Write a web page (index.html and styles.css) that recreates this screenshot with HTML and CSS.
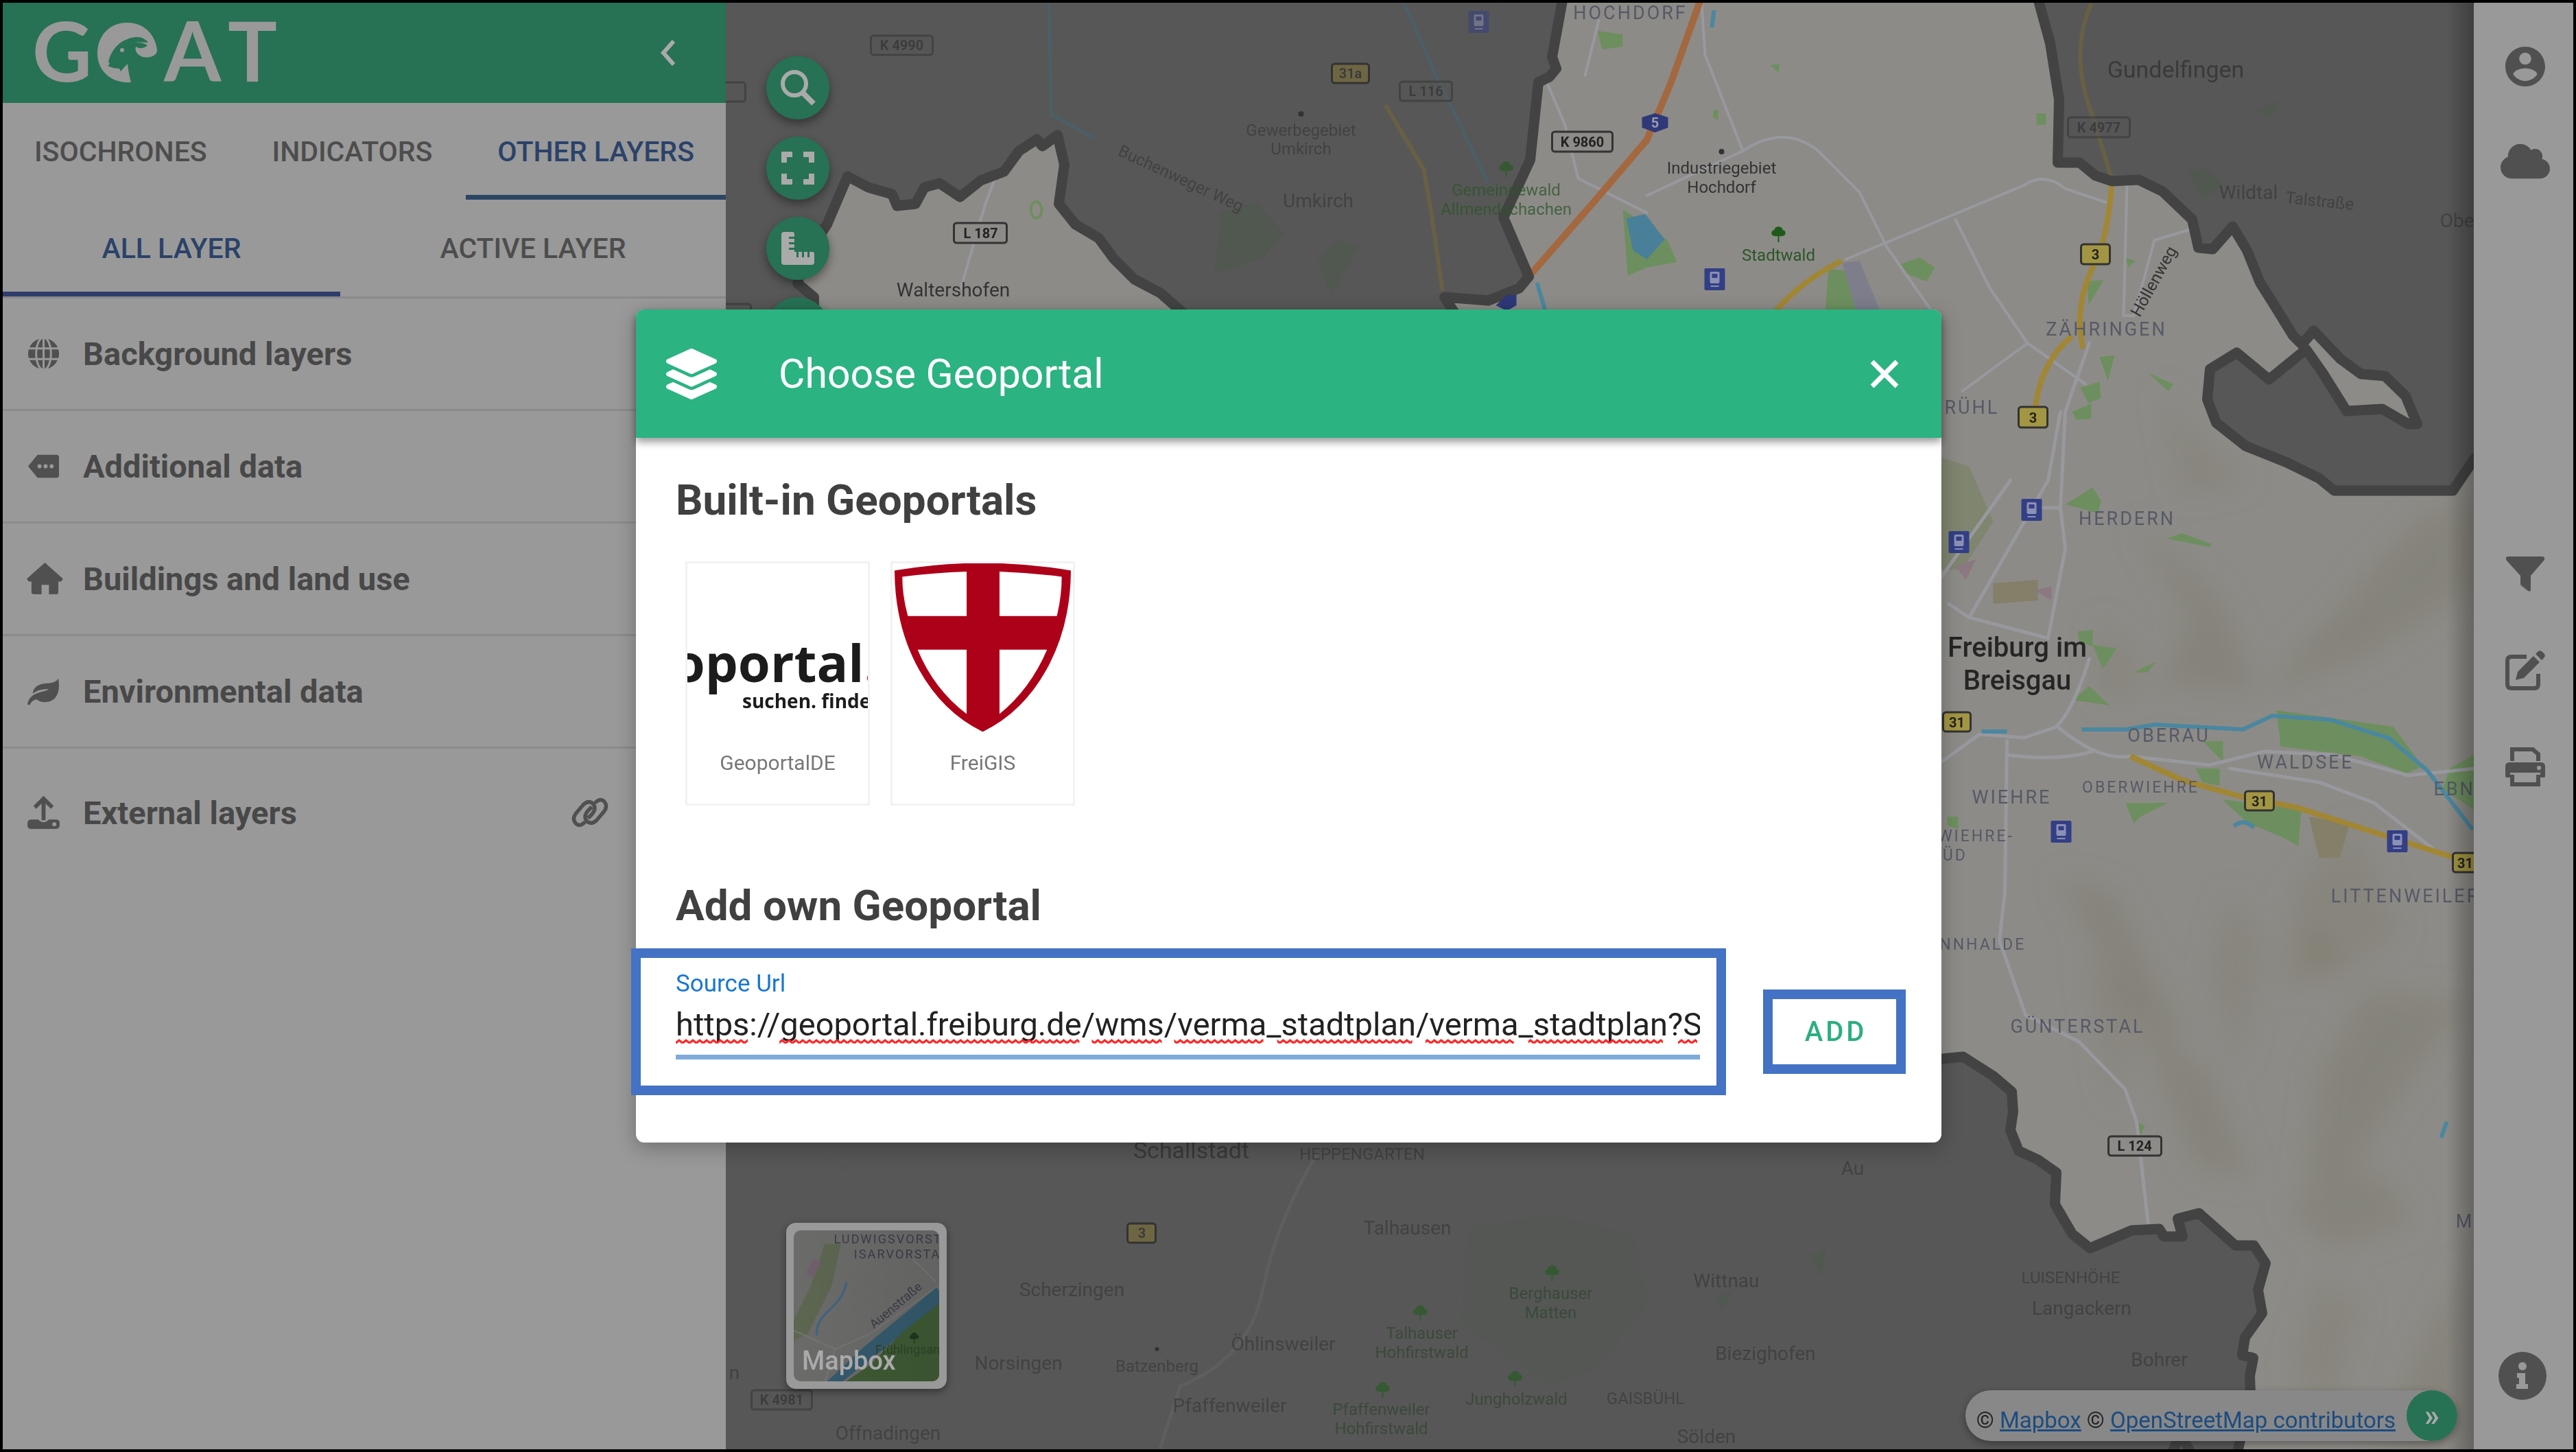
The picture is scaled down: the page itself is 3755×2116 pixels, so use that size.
FILE: index.html
```html
<!DOCTYPE html>
<html lang="en">
<head>
<meta charset="utf-8">
<title>GOAT – Choose Geoportal</title>
<link rel="stylesheet" href="styles.css">
</head>
<body>
<div class="app">
  <aside class="sidebar">
    <header class="brand">
      <svg class="logo" viewBox="44 4 366 146" role="img" aria-label="GOAT">
        <g class="logo-text"><text x="45" y="119">G</text><text x="237" y="119">A</text><text x="330" y="119">T</text></g>
        <path d="M189 120C160 122 140 103 140 78C140 50 160 33 183 33C208 33 224 50 227 72C228 82 215 85 206 83C198 80 194 74 196 68C202 72 209 70 213 66C207 62 200 62 193 61L214 62C209 55 198 51 184 57C172 61 160 72 156 90L158 93L155 96L163 99L172 100L174 104L179 98L184 93C185 104 187 113 189 120Z"/>
        <circle cx="176" cy="73" r="3"/>
      </svg>
      <button class="plain" aria-label="Collapse panel"><svg class="chevron" viewBox="0 0 24 40"><path d="M20 3L5 20L20 37"/></svg></button>
    </header>
    <nav class="tabs main-tabs">
      <button class="tab">ISOCHRONES</button>
      <button class="tab">INDICATORS</button>
      <button class="tab active">OTHER LAYERS</button>
    </nav>
    <nav class="tabs sub-tabs">
      <button class="tab active">ALL LAYER</button>
      <button class="tab">ACTIVE LAYER</button>
    </nav>
    <ul class="layers">
      <li><svg class="ico" viewBox="0 0 48 48"><circle cx="24" cy="24" r="23"/><g class="cut"><ellipse cx="24" cy="24" rx="11" ry="24"/><path d="M24 0V48M2 16H46M2 32H46"/></g></svg><span>Background layers</span></li>
      <li><svg class="ico" viewBox="0 0 48 48"><path d="M15 7H43Q47 7 47 11V37Q47 41 43 41H15L1 24Z"/><g class="dots"><circle cx="18" cy="24" r="3"/><circle cx="27" cy="24" r="3"/><circle cx="36" cy="24" r="3"/></g></svg><span>Additional data</span></li>
      <li><svg class="ico" viewBox="0 0 48 48"><path d="M26 0L53 24L50 28H46V44Q46 47 43 47H32V33H21V47H10Q6 47 6 44V28H2L-1 24Z"/></svg><span>Buildings and land use</span></li>
      <li><svg class="ico" viewBox="0 0 48 48"><path d="M46 5C50 28 41 41 24 40C20 40 16 38 14 36C8 37 5 40 4 44H0C1 34 8 28 20 25Q29 23 32 21Q20 19 8 27C9 16 20 12 31 12Q42 11 46 5Z"/></svg><span>Environmental data</span></li>
      <li class="external"><svg class="ico" viewBox="0 0 48 48"><path d="M6 34H16Q24 42 32 34H42Q48 34 48 39V43Q48 48 42 48H6Q0 48 0 42V40Q0 34 6 34Z"/><path class="line" d="M24 35V5M11 16L24 3L37 16"/><circle class="hole" cx="40" cy="41" r="3"/></svg><span>External layers</span>
        <button class="plain link" aria-label="Add external layer"><svg viewBox="0 0 56 48"><path class="line" d="M20 39Q12 48 5 41Q-1 34 6 25L18 11Q26 4 33 10Q39 18 31 27L25 33M36 9Q44 0 51 7Q57 14 50 23L38 37Q30 44 23 38Q17 30 25 21L31 15"/></svg></button></li>
    </ul>
  </aside>

  <main class="map">
    <svg class="canvas" viewBox="1057 4 2549 2108" preserveAspectRatio="xMidYMid slice">
      <defs>
        <filter id="soft"><feGaussianBlur stdDeviation="20"/></filter>
        <linearGradient id="edge"><stop offset="0" stop-color="#000" stop-opacity="0"/><stop offset="1" stop-color="#000" stop-opacity=".28"/></linearGradient>
        <symbol id="tree" viewBox="0 0 24 24" overflow="visible"><path d="M12 0Q18 1 18 5Q23 6 22 11Q20 15 13 14V23H11V14Q3 15 2 11Q1 6 6 5Q6 1 12 0Z"/></symbol>
        <symbol id="train" viewBox="0 0 30 32" overflow="visible"><rect width="30" height="32" rx="2" fill="#333f85"/><rect x="8" y="5" width="14" height="17" rx="2" fill="#8b90b5"/><rect x="11" y="8" width="8" height="6" fill="#333f85"/><path d="M9 26H21" stroke="#8b90b5" stroke-width="2"/></symbol>
        <clipPath id="city"><path id="east" d="M2279 -10L2262 83L2268 100L2258 112L2242 120L2230 233L2191 317L2228 403L2214 420L2169 438L2105 433L2118 453L2400 1000L2780 1545L2831 1543L2861 1540L2905 1568L2932 1591L2934 1620L2930 1647L2942 1677L2970 1690L2997 1709L2995 1755L3020 1798L3046 1819L3107 1793L3147 1791L3154 1802L3181 1802L3174 1776L3205 1768L3258 1815L3285 1815L3302 1841L3291 1880L3297 1914L3272 1949L3268 1975L3284 1979L3279 2005L3280 2031L3258 2130H3640V640L3606 669L3575 715H3402L3380 697L3333 674L3273 650L3230 616L3217 582L3221 538L3260 514L3307 553L3361 509L3385 543L3420 599L3472 596L3510 618L3523 618L3506 577L3476 548L3441 545L3411 523L3372 482L3355 502L3342 489L3318 450L3294 412L3275 365L3254 330L3225 363L3204 361L3195 320L3152 279L3117 262L3078 264L3054 256L3031 237L2999 237L3001 145L2988 63L2968 -10Z"/><path id="west" d="M1186 460V433L1162 413L1170 380L1205 327L1222 287L1235 257L1265 273L1300 283L1307 300L1334 297L1347 273L1369 267L1399 287L1429 263L1463 250L1485 220L1511 203L1519 213L1541 197L1551 240L1543 297L1567 327L1601 347L1623 377L1653 407L1691 427L1740 470Z"/></clipPath>
      </defs>
      <rect x="1057" y="0" width="2560" height="2120" fill="#575757"/>

      <g fill="#4b594a" opacity=".6">
        <path d="M1780 310L1830 295L1870 340L1840 375L1770 400ZM1920 380L1950 350L1980 360L1940 430ZM1190 1680L1230 1700L1245 1710Z"/>
        <path d="M2140 1790L2260 1770L2380 1800L2400 1900L2330 1990L2260 2020L2130 1930Z" opacity=".4"/>
        <path d="M3190 250L3215 245L3240 270L3210 290ZM3290 160L3320 148L3310 172ZM2640 1830L2660 1820L2655 1860ZM2500 1890L2525 1880L2510 1910Z"/>
      </g>
      <g fill="none" stroke-width="5">
        <path d="M1528 0L1532 167L1592 200M2044 0L2096 117L2169 267" stroke="#4b5f66"/>
        <path d="M2019 153L2075 247L2087 317L2102 423M3048 5Q3015 80 3050 170L3078 262" stroke="#686044" stroke-width="6"/>
        <path d="M1920 1680Q1860 1780 1840 1880T1720 2020L1690 2112" stroke="#5e5e5e"/>
      </g>

      <g clip-path="url(#city)">
        <rect x="1057" y="0" width="2560" height="2120" fill="#8d8b87"/>
        <g filter="url(#soft)" fill="#807e70">
          <path d="M3110 760L3190 900L3150 1000L3290 1010L3240 880ZM3520 760L3600 720V860L3440 960L3300 1010L3360 940ZM3000 1280L3080 1300L3180 1500L3140 1540ZM3350 1330L3420 1400L3330 1440ZM3450 1440L3600 1460L3520 1560L3420 1720L3360 1740L3380 1560ZM3590 1840V2112H3470L3530 1960ZM3330 1760L3460 1700L3520 1780L3400 1820ZM3120 1500L3220 1560L3280 1720L3200 1700Z" opacity=".6"/>
          <path d="M3430 1200L3500 1360L3380 1440L3340 1300ZM3060 900L3110 960L3120 1010L3060 1020ZM3040 1400L3120 1440L3080 1620ZM3150 560L3200 640L3280 700L3180 720ZM3380 1860L3440 1900L3400 2060L3340 2000ZM3250 1300L3300 1380L3260 1560L3220 1420Z" opacity=".45"/>
        </g>
        <path d="M2750 640L2870 680L2905 760L2860 830L2780 830Z" fill="#7f856f"/>
        <g fill="#6d8f5f">
          <path d="M3318 1035L3488 1059L3531 1117L3507 1127L3440 1102L3324 1088ZM3239 1165L3354 1180L3350 1233L3324 1219L3275 1199ZM3200 1120H3235V1145L3210 1140ZM3210 1080H3240V1110ZM3098 1170H3160L3120 1190L3110 1200ZM3020 1020L3045 1000L3075 1028ZM3050 940L3085 945L3065 975ZM3028 920L3050 918V942L3030 935ZM3110 980L3142 964L3130 980ZM3157 785L3180 777L3224 793L3220 797ZM3010 735L3050 710L3062 730L3058 748ZM3570 1120L3606 1100V1180L3560 1150Z"/>
          <path d="M3020 600L3048 588V610L3026 612ZM3032 565L3060 556L3062 580L3044 588ZM3060 520L3082 518L3072 555ZM3130 543L3168 560L3160 570ZM2770 385L2798 375L2820 390L2808 410L2780 400ZM2665 392L2695 395L2705 453H2660ZM2365 305L2430 350L2444 382L2400 390L2372 402ZM2328 45L2365 50V68L2335 72ZM3042 410L3066 408L3044 445ZM3096 375L3112 380L3102 390ZM2838 1190H2854V1208L2838 1203ZM3112 1634L3126 1640L3120 1655ZM2580 95L2594 93L2592 106ZM2498 160H2504V176L2496 170ZM2968 165H2982V182H2968Z"/>
          <ellipse cx="1510" cy="306" rx="8" ry="12" fill="none" stroke="#6d8f5f" stroke-width="4"/>
        </g>
        <path d="M2905 850L2970 845V875L2905 880ZM3365 1190L3425 1200L3410 1250L3380 1250Z" fill="#847f69"/>
        <path d="M2850 825L2880 815L2865 845ZM2965 860L2990 855V875Z" fill="#8c7880"/>
        <path d="M2685 383L2710 380L2740 453H2705Z" fill="#7e7d8c"/>
        <path d="M2370 318L2398 312L2426 349L2400 378L2380 365Z" fill="#4a7f99"/>
        <g fill="none" stroke="#98999e" stroke-linecap="round" stroke-width="6">
          <path d="M2400 285L2540 220Q2600 180 2650 220L2710 280L2750 360L2815 453M2690 378L2950 270Q2980 250 3010 275L3070 295M2850 320L2900 420L2955 500L2860 570M3100 270L3095 460H3110L3140 350L3190 335M2955 500L3040 560" stroke-width="4"/>
          <path d="M3045 500L3010 600L3003 740L3010 800L2985 930L2870 900L2840 880M3003 600L2985 700L2870 900M3000 740H2960M2930 700L2830 840M3045 960Q3020 1040 2995 1060L2950 1075L2885 1070L2830 1110M2925 1080L2922 1300L2914 1370L2952 1479L3030 1518L3097 1587L3114 1634L3131 1785M3000 1060Q3060 1110 3105 1102M2925 1100Q3000 1110 3050 1095M3105 1102L3220 1115L3300 1095L3400 1100L3510 1130L3606 1120M3250 1120L3380 1140L3460 1170L3550 1240" stroke-width="5"/>
          <path d="M1450 260L1435 300L1400 420M2250 110L2280 180L2300 260L2400 310M2480 5L2485 80L2540 220M2330 30L2310 110" stroke-width="4"/>
        </g>
        <path d="M3034 1063H3098L3141 1056L3269 1063L3312 1043L3397 1049L3482 1076L3537 1122L3604 1209M2888 1066H2925M3256 1204Q3270 1192 3285 1206M3566 1635L3558 1658M2498 15L2495 40M2240 412L2252 453" fill="none" stroke="#4a87a0" stroke-width="6"/>
        <path d="M3105 1102L3178 1136L3263 1160L3348 1177L3470 1216L3600 1257M3078 262Q3075 320 3060 370Q3020 440 3036 508M3020 490Q2970 530 2965 608M2684 380Q2625 410 2588 453" fill="none" stroke="#a18634" stroke-width="8"/>
        <path d="M2480 -5L2435 121L2400 204L2324 293L2228 403" fill="none" stroke="#a3683f" stroke-width="10"/>
      </g>
      <g class="border"><use href="#east"/><use href="#west"/><path d="M3160 2130L3178 2090L3200 2130"/></g>

      <g class="shield">
        <g opacity=".55"><rect x="1269" y="52" width="90" height="28"/><rect x="2040" y="119" width="76" height="28"/><rect x="3014" y="171" width="90" height="29"/><rect x="1095" y="2026" width="88" height="28"/><rect x="1020" y="120" width="66" height="28"/><rect x="1020" y="443" width="74" height="28"/></g>
        <g fill="#8d8b87"><rect x="2262" y="192" width="88" height="29"/><rect x="1390" y="325" width="77" height="29"/><rect x="3073" y="1656" width="77" height="28"/></g>
        <g fill="#a39642"><rect x="3033" y="356" width="42" height="29"/><rect x="2942" y="593" width="42" height="30"/><rect x="2832" y="1038" width="40" height="28"/><rect x="3272" y="1153" width="42" height="28"/><rect x="3575" y="1243" width="42" height="28"/></g>
        <g fill="#6e6643"><rect x="1941" y="93" width="54" height="28"/><rect x="1643" y="1783" width="41" height="28"/></g>
      </g>
      <path d="M2412 165L2431 171V186L2412 193L2393 186V171ZM2196 430H2210V445L2196 453L2180 445Z" fill="#2f3878"/>
      <g class="shield-text">
        <g fill="#3d3d3d"><text x="1314" y="73">K 4990</text><text x="2078" y="140">L 116</text><text x="3059" y="193">K 4977</text><text x="1139" y="2047">K 4981</text><text x="1968" y="114">31a</text><text x="1664" y="1804">3</text></g>
        <g fill="#222"><text x="2306" y="214">K 9860</text><text x="1429" y="347">L 187</text><text x="3111" y="1677">L 124</text><text x="3054" y="378">3</text><text x="2963" y="616">3</text><text x="2852" y="1060">31</text><text x="3293" y="1175">31</text><text x="3593" y="1265">31</text></g>
        <text x="2412" y="186" fill="#9a9cb0">5</text>
      </g>
      <g><use href="#train" x="2484" y="391" width="30" height="32"/><use href="#train" x="2946" y="727" width="30" height="32"/><use href="#train" x="2840" y="774" width="30" height="32"/><use href="#train" x="2989" y="1196" width="30" height="32"/><use href="#train" x="3479" y="1210" width="30" height="32"/><use href="#train" x="2140" y="16" width="30" height="32" opacity=".5"/></g>
      <g fill="#1f5a1c"><use href="#tree" x="2580" y="330" width="24" height="24"/><g opacity=".6"><use href="#tree" x="2183" y="235" width="24" height="24"/><use href="#tree" x="2250" y="1844" width="24" height="24"/><use href="#tree" x="2058" y="1902" width="24" height="24"/><use href="#tree" x="2196" y="1998" width="24" height="24"/><use href="#tree" x="2003" y="2014" width="24" height="24"/></g></g>
      <g fill="#333"><circle cx="2509" cy="221" r="4"/><circle cx="1896" cy="166" r="4"/><circle cx="1686" cy="1966" r="3"/></g>

      <g class="place on-light">
        <text x="1389" y="432">Waltershofen</text>
        <g class="small"><text x="2509" y="253">Industriegebiet</text><text x="2509" y="281">Hochdorf</text><text x="3139" y="418" transform="rotate(-61 3139 410)">Höllenweg</text></g>
        <g class="city"><text x="2940" y="957">Freiburg im</text><text x="2940" y="1005">Breisgau</text></g>
      </g>
      <g class="place wood"><text x="2592" y="380">Stadtwald</text><g opacity=".75"><text x="2195" y="285">Gemeindewald</text><text x="2195" y="313">Allmendschachen</text></g></g>
      <g class="district"><text x="2376" y="28">HOCHDORF</text><text x="3070" y="489">ZÄHRINGEN</text><text x="2864" y="603">BRÜHL</text><text x="3100" y="765">HERDERN</text><text x="3161" y="1081">OBERAU</text><text x="3360" y="1120">WALDSEE</text><text x="2932" y="1171">WIEHRE</text><text x="3028" y="1505">GÜNTERSTAL</text><text x="3506" y="1315">LITTENWEILER</text><text x="3596" y="1159">EBNET</text><text x="3603" y="1789">MA</text>
        <g class="minor"><text x="3120" y="1155">OBERWIEHRE</text><text x="2880" y="1226">WIEHRE-</text><text x="2841" y="1254">SÜD</text><text x="2872" y="1384">SONNHALDE</text></g></g>
      <g class="place on-dark">
        <text class="town" x="3171" y="113">Gundelfingen</text><text class="town" x="1736" y="1688">Schallstadt</text>
        <g><text x="1921" y="302">Umkirch</text><text x="3277" y="290">Wildtal</text><text x="3586" y="331">Ober</text><text x="2700" y="1712">Au</text><text x="2051" y="1799">Talhausen</text><text x="1562" y="1889">Scherzingen</text><text x="2516" y="1876">Wittnau</text><text x="1870" y="1968">Öhlinsweiler</text><text x="2573" y="1982">Biezighofen</text><text x="1484" y="1996">Norsingen</text><text x="1792" y="2058">Pfaffenweiler</text><text x="1294" y="2098">Offnadingen</text><text x="2487" y="2103">Sölden</text><text x="3034" y="1916">Langackern</text><text x="3147" y="1991">Bohrer</text><text x="1070" y="2010">n</text></g>
        <g class="small"><text x="1896" y="198">Gewerbegebiet</text><text x="1896" y="225">Umkirch</text><text x="1720" y="268" transform="rotate(25 1720 262)">Buchenweger Weg</text><text x="3381" y="301" transform="rotate(6 3381 294)">Talstraße</text><text x="1686" y="1999">Batzenberg</text><text x="1985" y="1690">HEPPENGARTEN</text><text x="2398" y="2046">GAISBÜHL</text><text x="3018" y="1870">LUISENHÖHE</text></g>
        <g class="small wood"><text x="2260" y="1893">Berghauser</text><text x="2260" y="1921">Matten</text><text x="2072" y="1951">Talhauser</text><text x="2072" y="1979">Hohfirstwald</text><text x="2210" y="2047">Jungholzwald</text><text x="2013" y="2062">Pfaffenweiler</text><text x="2013" y="2090">Hohfirstwald</text></g>
      </g>
      <rect x="3566" y="0" width="40" height="2120" fill="url(#edge)"/>
    </svg>

    <div class="tools">
      <button class="round" aria-label="Search"><svg viewBox="0 0 56 56"><circle cx="23" cy="22" r="17"/><path d="M35 35L51 51" stroke-width="8"/></svg></button>
      <button class="round" aria-label="Full screen"><svg viewBox="0 0 56 56"><path d="M8 20V8H20M36 8H48V20M48 36V48H36M20 48H8V36" stroke-width="8"/></svg></button>
      <button class="round" aria-label="Measure"><svg viewBox="0 0 56 56"><path class="solid" d="M8 4H20Q23 4 23 7V11H15V14H23V19H15V22H23V27H15V30H23V33H26V41H29V33H34V41H37V33H42V41H45V33H49Q52 33 52 36V48Q52 52 48 52H8Q4 52 4 48V8Q4 4 8 4Z"/></svg></button>
      <button class="round" aria-label="Draw"></button>
    </div>

    <div class="map-foot">
      <button class="basemap">
        <svg viewBox="0 0 210 219" preserveAspectRatio="xMidYMid slice">
          <rect width="210" height="219" fill="#6b6b6a"/>
          <path d="M45 20H68L55 80L20 150L0 160V130L25 80Z" fill="#5d6650"/><path d="M28 42L40 44L28 70L18 62Z" fill="#705f6c"/>
          <path d="M76 75Q74 95 52 115T34 152" fill="none" stroke="#3f6482" stroke-width="3"/>
          <path d="M0 145L60 172L110 150L210 80M170 40L205 75M60 172L45 219" fill="none" stroke="#757575" stroke-width="2"/>
          <path d="M206 83L210 88V112L170 140L70 219H48L100 170Z" fill="#355a6e"/><path d="M210 106L160 145L110 195L75 219H210Z" fill="#3f5a34"/>
          <g fill="#1d3a1c"><use href="#tree" x="166" y="148" width="16" height="16"/></g>
          <g class="thumb-text"><text x="58" y="19">LUDWIGSVORSTADT</text><text x="87" y="41">ISARVORSTADT</text><text x="116" y="143" transform="rotate(-40 116 143)" class="street">Auenstraße</text><text x="118" y="179" fill="#2c4428" class="street">Frühlingsanlagen</text></g>
          <rect width="210" height="219" fill="url(#edge)" opacity=".3"/>
        </svg>
        <span>Mapbox</span>
      </button>
      <div class="attribution"><p>© <a href="#mapbox">Mapbox</a> © <a href="#osm">OpenStreetMap contributors</a></p><button class="more" aria-label="Toggle attribution">»</button></div>
    </div>
  </main>

  <nav class="rail">
    <button class="plain" aria-label="Account"><svg viewBox="2 2 20 20"><path d="M12 2C6.48 2 2 6.48 2 12s4.48 10 10 10 10-4.48 10-10S17.52 2 12 2zm0 3c1.66 0 3 1.34 3 3s-1.34 3-3 3-3-1.34-3-3 1.34-3 3-3zm0 14.2c-2.500 0-4.710-1.280-6-3.220.03-1.990 4-3.080 6-3.080 1.990 0 5.970 1.090 6 3.080-1.290 1.940-3.500 3.220-6 3.220z"/></svg></button>
    <button class="plain cloud" aria-label="Cloud"><svg viewBox="0 32 640 448"><path d="M537.6 226.6c4.1-10.7 6.4-22.4 6.4-34.6 0-53-43-96-96-96-19.7 0-38.1 6-53.300 16.200C367 64.200 315.300 32 256 32c-88.400 0-160 71.600-160 160 0 2.700.1 5.400.2 8.100C40.200 219.800 0 273.200 0 336c0 79.500 64.500 144 144 144h368c70.700 0 128-57.300 128-128 0-61.900-44-113.600-102.400-125.400z"/></svg></button>
    <button class="plain first-tool" aria-label="Filter"><svg viewBox="0 0 58 58"><path d="M3 4H55Q59 6 56 10L37 32V53Q36 56 33 54L24 47Q22 46 22 43V32L2 10Q-1 6 3 4Z"/></svg></button>
    <button class="plain" aria-label="Edit"><svg viewBox="0 0 58 58"><path class="line" d="M31 9H9Q3 9 3 15V49Q3 55 9 55H42Q48 55 48 49V34"/><path d="M41 8L50 17L27 40L15 43L18 31ZM44 5L48 1Q51 -1 54 2L57 5Q59 8 56 11L53 14Z"/></svg></button>
    <button class="plain" aria-label="Print"><svg viewBox="0 0 58 58"><path class="line" d="M10 20V3H40L48 10V20M10 40V54H48V40"/><path d="M6 22H52Q58 22 58 28V42Q58 44 56 44H51V37H7V44H2Q0 44 0 42V28Q0 22 6 22Z"/><circle class="hole" cx="49" cy="30" r="3"/></svg></button>
    <button class="plain info" aria-label="Information"><svg viewBox="0 0 70 70"><circle cx="35" cy="35" r="35"/><path class="hole" d="M35 15A6 6 0 1 1 35 27A6 6 0 1 1 35 15ZM27 31H39V47H43V54H26V47H30V38H27Z"/></svg></button>
  </nav>
</div>

<div class="overlay">
  <section class="modal" role="dialog" aria-labelledby="modal-title">
    <header class="modal-head">
      <svg class="stack" viewBox="0 0 512 512"><path d="M12.410 148.020l232.940 105.670c6.800 3.090 14.490 3.090 21.290 0l232.940-105.670c16.550-7.510 16.550-32.520 0-40.030L266.650 2.310a25.607 25.607 0 0 0-21.290 0L12.410 107.980c-16.550 7.510-16.550 32.530 0 40.040zm487.180 88.280l-58.090-26.330-161.640 73.270c-7.560 3.430-15.590 5.170-23.860 5.170s-16.290-1.740-23.860-5.170L70.510 209.970l-58.100 26.330c-16.550 7.500-16.550 32.500 0 40l232.940 105.590c6.800 3.080 14.490 3.080 21.290 0L499.590 276.300c16.550-7.500 16.550-32.500 0-40zm0 127.800l-57.870-26.230-161.860 73.370c-7.560 3.430-15.590 5.170-23.860 5.170s-16.290-1.740-23.860-5.170L70.290 337.870 12.410 364.100c-16.550 7.500-16.550 32.500 0 40l232.940 105.590c6.800 3.080 14.490 3.080 21.290 0L499.590 404.100c16.550-7.500 16.550-32.500 0-40z"/></svg>
      <h1 id="modal-title">Choose Geoportal</h1>
      <button class="plain close" aria-label="Close"><svg viewBox="0 0 42 42"><path d="M3 3L39 39M39 3L3 39"/></svg></button>
    </header>
    <div class="modal-body">
      <h2>Built-in Geoportals</h2>
      <div class="cards">
        <button class="card">
          <span class="picture wordmark"><b>geoportal<i>.</i>de</b><small>suchen. finden.</small></span>
          <span class="caption">GeoportalDE</span>
        </button>
        <button class="card">
          <span class="picture"><svg viewBox="3 0 258 246" preserveAspectRatio="none"><path d="M9 13Q132 -8 255 13C254 120 204 206 132 242C60 206 10 120 9 13Z" fill="#ad0019" stroke="#ad0019" stroke-width="6"/><path d="M17 21Q62 14 109 12V90H25Q17 55 17 21ZM156 12Q200 14 245 21Q245 55 238 90H156ZM39 149H109V262Q62 218 39 149ZM156 149H224Q200 218 156 262Z" fill="#fff" transform="translate(0 2) scale(1 .83)"/></svg></span>
          <span class="caption">FreiGIS</span>
        </button>
      </div>
      <h2 class="own">Add own Geoportal</h2>
      <form class="source">
        <div class="field mark">
          <label for="url">Source Url</label>
          <div class="entry">
            <input id="url" type="text" spellcheck="false" value="https://geoportal.freiburg.de/wms/verma_stadtplan/verma_stadtplan?S">
            <svg class="squiggle" viewBox="0 0 1492 8" preserveAspectRatio="none"><defs><pattern id="wave" width="10" height="8" patternUnits="userSpaceOnUse"><path d="M0 6L5 2L10 6" fill="none" stroke="#f22" stroke-width="3"/></pattern></defs><path fill="url(#wave)" d="M0 0H105V8H0ZM151 0H588V8H151ZM606 0H708V8H606ZM726 0H856V8H726ZM876 0H1073V8H876ZM1092 0H1221V8H1092ZM1242 0H1438V8H1242ZM1460 0H1488V8H1460Z"/></svg>
          </div>
        </div>
        <button class="add mark" type="button">ADD</button>
      </form>
    </div>
  </section>
</div>
</body>
</html>
```
FILE: styles.css
```css
* { box-sizing: border-box; }
body { margin: 0; background: #000; font-family: Roboto, "Liberation Sans", sans-serif; }
button { font: inherit; border: 0; margin: 0; padding: 0; background: none; color: inherit; cursor: pointer; }
h1, h2, p, ul { margin: 0; padding: 0; }
svg { display: block; }

.app { display: grid; grid-template-columns: 1054px 1fr 145px; min-height: 100vh; border: 4px solid #000; }

/* Left panel */
.sidebar { background: #999; color: #484848; }
.brand { display: flex; align-items: center; justify-content: space-between; height: 146px; padding: 0 72px 0 42px; background: #277154; }
.logo { width: 366px; height: 146px; fill: #999; }
.logo-text { font: 700 120px Lato, sans-serif; }
.chevron { width: 24px; height: 42px; fill: none; stroke: #aaa; stroke-width: 6; }
.tabs { display: flex; }
.tab { color: #4d4d4d; font-size: 41px; font-weight: 500; height: 141px; padding-top: 8px; border-bottom: 7px solid transparent; white-space: nowrap; }
.main-tabs { justify-content: space-between; }
.main-tabs .tab { padding: 8px 46px 0; }
.tab.active { color: #2b4269; border-color: #2b4665; }
.sub-tabs { border-bottom: 3px solid #8a8a8a; }
.sub-tabs .tab { flex: 0 0 492px; }
.sub-tabs .tab + .tab { flex: 1; }
.sub-tabs .active { border-color: #303d6c; }
.layers { list-style: none; font-size: 47px; font-weight: 700; }
.layers li { display: flex; align-items: center; gap: 34px; height: 164px; padding: 0 36px; border-bottom: 3px solid #8b8b8b; }
.layers .external { height: 186px; border: 0; }
.ico { width: 47px; height: 47px; fill: #505050; overflow: visible; }
.cut { fill: none; stroke: #999; stroke-width: 3; }
.dots, .hole { fill: #999; }
.line { fill: none; stroke: #505050; stroke-width: 6; }
.layers .link { margin-left: auto; margin-right: 134px; }
.link svg { width: 56px; height: 44px; overflow: visible; }

/* Map */
.map { position: relative; display: flex; flex-direction: column; justify-content: space-between; overflow: hidden; background: #575757; }
.canvas { position: absolute; inset: 0; width: 100%; height: 100%; }
.border { fill: none; stroke: #434343; stroke-width: 15; stroke-linejoin: round; }
.shield rect { rx: 4px; stroke: #333; stroke-width: 3; }
.shield g:first-child rect { fill: #575757; }
.canvas text { text-anchor: middle; }
.shield-text { font-size: 20px; font-weight: 700; }
.place { font-size: 28px; }
.on-light { fill: #333; }
.on-dark { fill: #424242; }
.place .small { font-size: 24px; }
.place .town { font-size: 34px; fill: #3a3a3a; }
.city { font-size: 40px; font-weight: 500; fill: #252525; }
.wood { fill: #2b5529; font-size: 24px; }
.on-dark .wood { fill: #3b493a; }
.district { font-size: 27px; letter-spacing: 3px; fill: #565967; }
.district .minor { font-size: 23px; }
.tools { position: relative; display: grid; gap: 25px; padding: 78px 59px; justify-content: start; }
.round { display: grid; place-items: center; width: 92px; height: 92px; border-radius: 50%; background: #277154; box-shadow: 0 6px 14px #0006; }
.round svg { width: 56px; height: 56px; fill: none; stroke: #aaa; stroke-width: 6; }
.round .solid { fill: #aaa; stroke: none; }
.map-foot { position: relative; display: flex; justify-content: space-between; align-items: flex-end; padding: 0 24px 12px 88px; }
.basemap { position: relative; width: 234px; height: 242px; margin-bottom: 76px; border: 11px solid #999; border-radius: 14px; background: #999; box-shadow: 0 4px 12px #0006; }
.basemap svg { width: 100%; height: 100%; border-radius: 10px; }
.basemap span { position: absolute; left: 12px; bottom: 8px; color: #aaa; font-size: 38px; font-weight: 500; }
.thumb-text { font-size: 18px; letter-spacing: 2px; fill: #3b3d48; }
.thumb-text .street { letter-spacing: 0; }
.attribution { display: flex; align-items: center; height: 74px; border-radius: 37px; background: #888; box-shadow: 0 4px 12px #0005; font-size: 33px; color: #222; }
.attribution p { padding: 12px 16px 0 16px; }
.attribution a { color: #1d4c80; }
.more { width: 74px; height: 74px; border-radius: 50%; background: #277154; color: #aaa; font-size: 44px; font-weight: 700; line-height: 1; }

/* Right tool rail */
.rail { display: flex; flex-direction: column; align-items: center; gap: 83px; padding: 64px 0 72px 4px; background: #999; }
.rail svg { width: 58px; height: 58px; fill: #505050; overflow: visible; }
.rail .hole { fill: #999; }
.rail .cloud svg { width: 72px; height: 52px; }
.rail .first-tool { margin-top: 463px; }
.rail .info { margin: auto 8px 0 0; }
.rail .info svg { width: 70px; height: 70px; }

/* Dialog */
.overlay { position: fixed; inset: 0; display: grid; place-items: center; padding-left: 2px; }
.modal { width: 1903px; padding-bottom: 69px; border-radius: 12px; background: #fff; color: #404040; box-shadow: 0 8px 30px #0004; }
.modal-head { display: flex; align-items: center; height: 187px; padding: 0 62px 0 44px; border-radius: 12px 12px 0 0; background: #2bb381; color: #fff; box-shadow: 0 6px 12px #0006; }
.stack { width: 74px; height: 74px; fill: #fff; }
.modal-head h1 { margin-left: 90px; font-size: 59px; font-weight: 400; }
.close { margin-left: auto; }
.close svg { width: 42px; height: 42px; stroke: #fff; stroke-width: 7; }
.modal-body { padding: 51px 52px 0 58px; }
h2 { font-size: 62px; font-weight: 700; line-height: 80px; }
.cards { display: flex; gap: 30px; padding: 49px 14px 0; }
.card { display: flex; flex-direction: column; width: 269px; height: 356px; border: 3px solid #f2f2f2; color: #777; }
.picture { display: block; width: 100%; height: 246px; overflow: hidden; }
.picture svg { width: 100%; height: 100%; }
.wordmark { display: flex; flex-direction: column; align-items: center; justify-content: flex-end; padding-bottom: 34px; color: #1c1c1c; font-family: "Open Sans", sans-serif; white-space: nowrap; }
.wordmark b { font-size: 76px; line-height: 88px; font-weight: 700; }
.wordmark i { color: #d2143a; font-style: normal; }
.wordmark small { align-self: flex-start; padding-left: 80px; font-size: 28px; line-height: 24px; font-weight: 700; }
.caption { width: 100%; padding-top: 27px; font-size: 30px; text-align: center; }
.own { margin-top: 106px; }
.source { display: flex; align-items: flex-end; justify-content: space-between; margin: 22px 0 0 -65px; }
.mark { border: 14px solid #4472c4; }
.field { width: 1596px; height: 214px; padding: 16px 24px 0 51px; }
.field label { display: block; color: #1976d2; font-size: 35px; line-height: 44px; }
.entry { position: relative; }
.entry input { width: 100%; height: 88px; padding: 0 0 8px; border: 0; border-bottom: 7px solid #7faadb; outline: 0; font: 400 47px Roboto, sans-serif; color: #222; background: none; }
.squiggle { position: absolute; left: 0; bottom: 22px; width: 100%; height: 8px; }
.add { width: 208px; height: 123px; margin-bottom: 31px; padding-left: 4px; color: #2bae80; font-size: 40px; font-weight: 500; letter-spacing: 4px; }
```
